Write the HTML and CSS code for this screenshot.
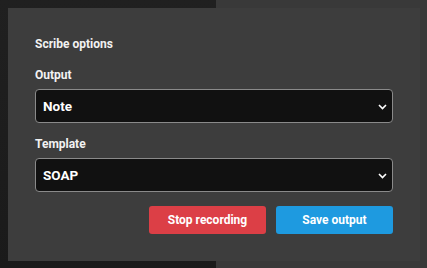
FILE: index.html
```html
<!DOCTYPE html>
<html>
<head>
<meta charset="utf-8">
<link rel="stylesheet" href="styles.css">
</head>
<body>
<div class="backdrop">
  <div class="bg-left"></div>
  <div class="bg-right"></div>
</div>
<div class="panel">
  <h2 class="title">Scribe options</h2>
  <label class="label">Output</label>
  <div class="select"><span>Note</span>
    <svg class="chev" width="9" height="6" viewBox="0 0 9 6"><path d="M1 1l3.5 3.5L8 1" fill="none" stroke="#fff" stroke-width="1.6"/></svg>
  </div>
  <label class="label label2">Template</label>
  <div class="select"><span>SOAP</span>
    <svg class="chev" width="9" height="6" viewBox="0 0 9 6"><path d="M1 1l3.5 3.5L8 1" fill="none" stroke="#fff" stroke-width="1.6"/></svg>
  </div>
  <div class="actions">
    <button class="btn btn-stop">Stop recording</button>
    <button class="btn btn-save">Save output</button>
  </div>
</div>
</body>
</html>
```
FILE: styles.css
```css
html, body { margin: 0; padding: 0; }
body {
  width: 427px; height: 268px; overflow: hidden; position: relative;
  font-family: Roboto, "Liberation Sans", sans-serif;
  background: #1c1c1c;
}
.backdrop { display: grid; grid-template-columns: 216px 1fr; height: 268px; }
.bg-left { background: linear-gradient(#202020, #1a1a1a); }
.bg-right { background: #393939; }
.panel {
  position: absolute; left: 8px; top: 8px; width: 412px; height: 253px;
  box-sizing: border-box; background: #3d3d3d;
  padding: 28px 27px 0 27px;
  display: flex; flex-direction: column;
}
.title { margin: 0; font-size: 12px; line-height: 16px; font-weight: 700; color: #f2f2f2; }
.label { display: block; margin-top: 15px; font-size: 12px; line-height: 16px; font-weight: 700; color: #f2f2f2; }
.label2 { margin-top: 13px; }
.select {
  margin-top: 6px; height: 34px; box-sizing: border-box;
  border: 1px solid #8a8a8a; border-radius: 4px; background: #111;
  display: flex; align-items: center; justify-content: space-between;
  padding: 0 5px 0 7px;
  color: #fff; font-size: 13.5px; font-weight: 700;
}
.chev { margin-top: 1px; }
.actions { display: flex; justify-content: flex-end; gap: 10px; margin-top: 14px; }
.btn {
  width: 117px; height: 28px; border: none; border-radius: 3px;
  color: #fff; font-family: inherit; font-size: 12px; font-weight: 700; padding: 0;
}
.btn-stop { background: #dc3f46; }
.btn-save { background: #1e9ae0; }
```
